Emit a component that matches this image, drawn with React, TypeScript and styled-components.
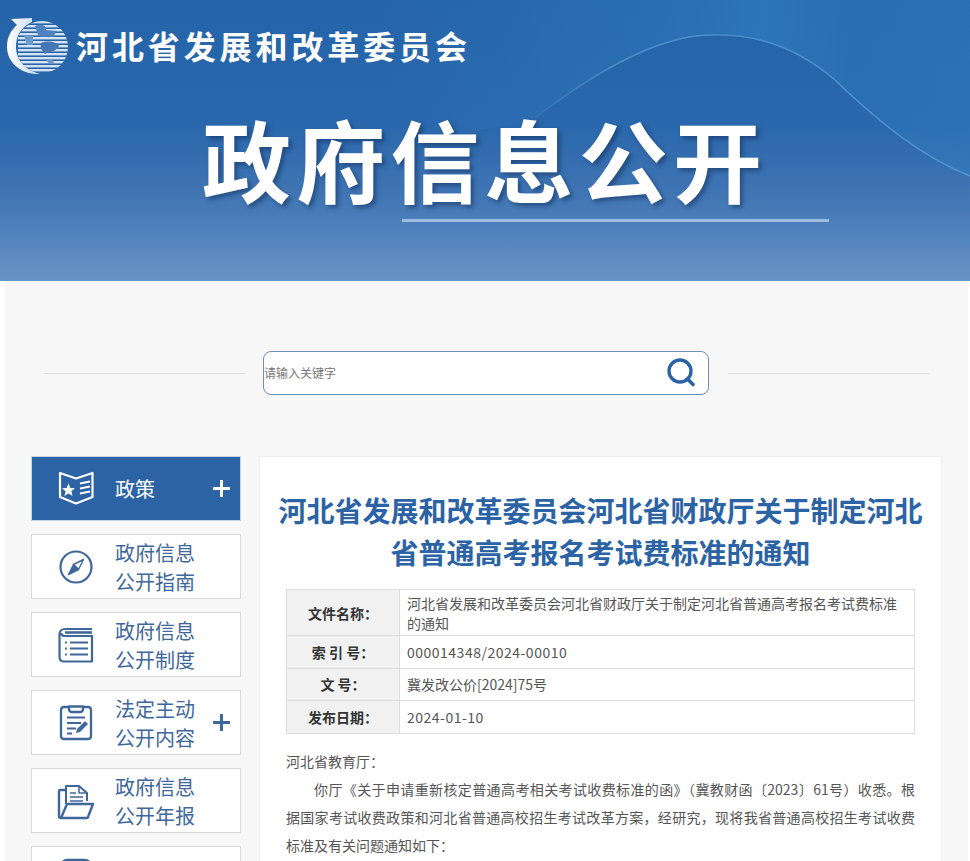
import { createGlobalStyle, styled } from 'styled-components';
import type { ReactNode } from 'react';

const FONT = '"Noto Sans CJK SC", "Liberation Sans", sans-serif';
const BLUE = '#2b63a5';
const NAV_TEXT = '#3f679b';

const GlobalStyle = createGlobalStyle`
  html, body {
    margin: 0;
    height: 861px;
    overflow: hidden;
    background: #fff;
    font-family: ${FONT};
  }
  * { box-sizing: border-box; }
`;

const Banner = styled.header`
  position: relative;
  height: 281px;
  overflow: hidden;
  background: linear-gradient(180deg, #2564a9 0%, #2a67ac 45%, #4377b5 72%, #6893c6 100%);
`;

const WaveArt = styled.svg`
  position: absolute;
  inset: 0;
`;

const BrandRow = styled.div`
  position: relative;
  display: flex;
  align-items: center;
  height: 58px;
  margin-top: 18px;
  padding-left: 7px;
`;

const BrandName = styled.div`
  margin: -4px 0 0 7px;
  color: #fff;
  font-size: 32px;
  font-weight: 700;
  line-height: 40px;
  letter-spacing: 3.9px;
  white-space: nowrap;
`;

const HeroTitle = styled.h1`
  position: relative;
  margin: 32px 0 0 202px;
  color: #fff;
  font-size: 89px;
  font-weight: 700;
  line-height: 100px;
  letter-spacing: 5.2px;
  white-space: nowrap;
  text-shadow: 3px 3px 4px rgba(20, 50, 95, 0.55);
`;

const HeroRule = styled.div`
  position: relative;
  width: 427px;
  height: 3px;
  margin: 11px 0 0 402px;
  background: #9dbbe0;
`;

const Main = styled.main`
  margin: 0 2px 0 5px;
  padding-bottom: 40px;
  background: #f7f7f7;
`;

const SearchRow = styled.div`
  display: flex;
  align-items: center;
  gap: 18px;
  padding: 70px 39px 0;
`;

const SearchLine = styled.div`
  flex: 1;
  height: 1px;
  background: #dedede;
`;

const SearchBox = styled.div`
  display: flex;
  align-items: center;
  justify-content: space-between;
  width: 446px;
  height: 44px;
  margin-right: 1px;
  padding-right: 11px;
  padding-bottom: 2px;
  border: 1px solid #6f8db5;
  border-radius: 8px;
  background: #fff;
  color: #777;
  font-size: 12px;
`;

const SearchIcon = styled.svg`
  width: 32px;
  height: 32px;
  color: ${BLUE};
`;

const Columns = styled.div`
  display: flex;
  align-items: flex-start;
  gap: 18px;
  padding: 61px 0 0 26px;
`;

const Sidebar = styled.nav`
  display: flex;
  flex-direction: column;
  gap: 13px;
  width: 210px;
`;

const NavItem = styled.a<{ $active?: boolean }>`
  display: flex;
  align-items: center;
  height: 65px;
  border: 1px solid ${({ $active }) => ($active ? '#c4d2e4' : '#d8d8d8')};
  background: ${({ $active }) => ($active ? BLUE : '#fff')};
  color: ${({ $active }) => ($active ? '#fff' : NAV_TEXT)};
`;

const NavIcon = styled.span`
  display: flex;
  justify-content: center;
  flex: none;
  width: 83px;
  padding-left: 5px;
  svg { display: block; width: 36px; height: 36px; overflow: visible; }
`;

const NavLabel = styled.span`
  flex: 1;
  font-size: 20px;
  line-height: 29px;
`;

const NavPlus = styled.svg`
  flex: none;
  width: 17px;
  height: 17px;
  margin-right: 10px;
`;

const Panel = styled.article`
  width: 683px;
  padding: 32px 26px 40px;
  border: 1px solid #eeeeee;
  background: #fff;
`;

const ArticleTitle = styled.h2`
  margin: 0 -10px 16px;
  color: ${BLUE};
  font-size: 28px;
  font-weight: 700;
  line-height: 42px;
  text-align: center;
`;

const InfoTable = styled.table`
  width: 629px;
  margin: 0;
  border-collapse: collapse;
  table-layout: fixed;
  font-size: 14px;
`;

const InfoLabel = styled.th`
  width: 113px;
  padding: 0;
  border: 1px solid #dddddd;
  background: #f1f1f1;
  color: #333;
  font-size: 14px;
  font-weight: 700;
  text-align: center;
`;

const InfoValue = styled.td<{ $tall?: boolean; $numeric?: boolean }>`
  height: ${({ $tall }) => ($tall ? '46px' : '32.5px')};
  padding: 0 16px 0 7px;
  border: 1px solid #dddddd;
  color: #555;
  line-height: 20px;
  letter-spacing: ${({ $numeric }) => ($numeric ? '0.5px' : '0')};
`;

const Body = styled.div`
  margin-top: 13px;
  color: #555;
  font-size: 14px;
  line-height: 28px;
`;

const Line = styled.p<{ $indent?: boolean; $fill?: boolean }>`
  margin: 0;
  text-indent: ${({ $indent }) => ($indent ? '2em' : '0')};
  text-align: justify;
  text-align-last: ${({ $fill }) => ($fill ? 'justify' : 'auto')};
`;

function Logo() {
  const stripes = [];
  for (let y = 3; y < 56; y += 4) stripes.push(y);
  return (
    <svg width="62" height="58" viewBox="0 0 62 58" aria-hidden="true">
      <defs>
        <clipPath id="globe">
          <circle cx="35" cy="29" r="26" />
        </clipPath>
        <linearGradient id="shell" x1="0" x2="1">
          <stop offset="0" stopColor="#ffffff" />
          <stop offset="1" stopColor="#c3d5ea" />
        </linearGradient>
      </defs>
      <path
        d="M4 1 L25 0 L25 4 C14 9 9 18 9 29 C9 42 18 52 33 56 C15 57 0 45 0 29 C0 19 4 12 10 7 Z"
        fill="url(#shell)"
      />
      <g clipPath="url(#globe)">
        {stripes.map((y) => (
          <rect key={y} x="11" y={y} width="52" height="2.4" fill="#d5e2f2" />
        ))}
        <path d="M28 8 C35 5 40 8 39 12 L50 13 L46 19 C40 17 35 21 31 17 Z" fill="#4f83be" />
        <path d="M34 25 C41 22 50 24 52 28 C49 34 43 33 38 36 C35 33 33 30 34 25Z" fill="#4579b6" />
        <path d="M17 18 H26 V27 H20 Z" fill="#6c9ac9" />
        <path d="M40 42 C44 41 47 42 47 45 C44 47 41 46 40 42Z" fill="#6c9ac9" />
      </g>
    </svg>
  );
}

function BookIcon() {
  return (
    <svg viewBox="0 0 36 36" fill="none" stroke="currentColor" strokeWidth="2.2" strokeLinejoin="round" aria-hidden="true">
      <path d="M2 2 L18 7.5 L34.5 2 V26 L18 32.5 L2 26 Z" />
      <path d="M10.5 12.5 L12.4 17 L17 17.3 L13.4 20.3 L14.6 25 L10.5 22.4 L6.4 25 L7.6 20.3 L4 17.3 L8.6 17 Z" fill="currentColor" stroke="none" />
      <path d="M22 12.5 L32 10.5 M22 17.5 L32 15.5 M22 22.5 L32 20.5" strokeWidth="2" />
    </svg>
  );
}

function CompassIcon() {
  return (
    <svg viewBox="0 0 36 36" fill="none" stroke="currentColor" strokeWidth="2.2" aria-hidden="true">
      <circle cx="18" cy="18" r="15.5" />
      <path d="M25.5 10.5 L20.5 20.5 L15.5 15.5 Z" strokeWidth="1.4" strokeLinejoin="round" />
      <path d="M10.5 25.5 L15.5 15.5 L20.5 20.5 Z" fill="currentColor" strokeWidth="1.4" strokeLinejoin="round" />
    </svg>
  );
}

function ListBookIcon() {
  return (
    <svg viewBox="0 0 36 36" fill="none" stroke="currentColor" strokeWidth="2.2" strokeLinejoin="round" aria-hidden="true">
      <path d="M34 2 H7 C3.5 2 1.5 4.5 1.5 7 V30 C1.5 33 3.5 34.5 6 34.5 H34 V9 H7 C4.5 9 3 7.5 3.5 6 " />
      <path d="M7 5.5 H34" strokeWidth="2.6" />
      <path d="M12 15.5 H30 M12 21.5 H30 M12 27.5 H30" strokeWidth="2" />
      <path d="M7 15.5 H8.8 M7 21.5 H8.8 M7 27.5 H8.8" strokeWidth="2.2" />
    </svg>
  );
}

function ClipboardIcon() {
  return (
    <svg viewBox="0 0 36 36" fill="none" stroke="currentColor" strokeWidth="2.3" strokeLinejoin="round" aria-hidden="true">
      <path d="M11 2 H6 C4 2 3 3 3 5 V31 C3 33 4 34 6 34 H30 C32 34 33 33 33 31 V5 C33 3 32 2 30 2 H25" />
      <path d="M11 1.5 H25 V4 C25 6 24 7 22 7 H14 C12 7 11 6 11 4 Z" />
      <path d="M9 12.5 H27 M9 18 H23 M9 23.5 H18 M9 28.5 H14" strokeWidth="2" />
      <path d="M18 28 L19 24 L27 16 L30 19 L22 27 Z" fill="currentColor" stroke="none" />
    </svg>
  );
}

function FolderIcon() {
  return (
    <svg viewBox="0 0 36 36" fill="none" stroke="currentColor" strokeWidth="2" strokeLinejoin="round" aria-hidden="true">
      <path d="M8 21 V3 H21 L29 10 V18" />
      <path d="M21 3 V10 H29" strokeWidth="1.5" />
      <path d="M12 10 H18 M12 14 H25 M12 18 H25" strokeWidth="1.6" />
      <path d="M8 7 H2 C1 7 1 8 1 9 V33 C1 34 2 35 3 35" strokeWidth="2.4" />
      <path d="M9 21 H35 L30 34 C30 35 29 35 28 35 H3 Z" strokeWidth="2.4" />
    </svg>
  );
}

function FrameIcon() {
  return (
    <svg viewBox="0 0 36 36" fill="none" stroke="currentColor" strokeWidth="2.4" aria-hidden="true">
      <rect x="2.5" y="-1" width="31" height="36" rx="7" />
      <path d="M9 12 H27 M9 20 H27" strokeWidth="2" />
    </svg>
  );
}

function Plus() {
  return (
    <NavPlus viewBox="0 0 17 17" aria-hidden="true">
      <path d="M8.5 0 V17 M0 8.5 H17" stroke="currentColor" strokeWidth="3" />
    </NavPlus>
  );
}

type NavEntry = { icon: ReactNode; label: ReactNode; plus?: boolean; active?: boolean };

const navEntries: NavEntry[] = [
  { icon: <BookIcon />, label: '政策', plus: true, active: true },
  { icon: <CompassIcon />, label: <>政府信息<br />公开指南</> },
  { icon: <ListBookIcon />, label: <>政府信息<br />公开制度</> },
  { icon: <ClipboardIcon />, label: <>法定主动<br />公开内容</>, plus: true },
  { icon: <FolderIcon />, label: <>政府信息<br />公开年报</> },
  { icon: <FrameIcon />, label: null },
];

export default function App() {
  return (
    <>
      <GlobalStyle />
      <Banner>
        <WaveArt width="970" height="281" viewBox="0 0 970 281" aria-hidden="true">
          <defs>
            <linearGradient id="wavefade" x1="380" y1="0" x2="970" y2="0" gradientUnits="userSpaceOnUse">
              <stop offset="0" stopColor="#2f7fc0" stopOpacity="0" />
              <stop offset="0.5" stopColor="#2f7fc0" stopOpacity="0.4" />
              <stop offset="0.65" stopColor="#2f7fc0" stopOpacity="0.65" />
              <stop offset="0.8" stopColor="#2f7fc0" stopOpacity="0.35" />
              <stop offset="1" stopColor="#2f7fc0" stopOpacity="0.45" />
            </linearGradient>
            <linearGradient id="edgefade" x1="500" y1="0" x2="970" y2="0" gradientUnits="userSpaceOnUse">
              <stop offset="0" stopColor="#62a6dc" stopOpacity="0" />
              <stop offset="0.25" stopColor="#62a6dc" stopOpacity="0.6" />
              <stop offset="1" stopColor="#62a6dc" stopOpacity="0.7" />
            </linearGradient>
          </defs>
          <path
            d="M380 0 H970 V176 C925 158 885 128 835 80 C800 50 760 33 710 35 C660 36 600 68 535 118 C490 135 430 130 380 140 Z"
            fill="url(#wavefade)"
          />
          <path
            d="M535 118 C600 68 660 36 710 35 C760 33 800 50 835 80 C885 128 925 158 970 176"
            fill="none"
            stroke="url(#edgefade)"
            strokeWidth="1.4"
          />
        </WaveArt>
        <BrandRow>
          <Logo />
          <BrandName>河北省发展和改革委员会</BrandName>
        </BrandRow>
        <HeroTitle>政府信息公开</HeroTitle>
        <HeroRule />
      </Banner>
      <Main>
        <SearchRow>
          <SearchLine />
          <SearchBox>
            请输入关键字
            <SearchIcon viewBox="0 0 32 32" aria-hidden="true">
              <circle cx="15" cy="15" r="11" fill="none" stroke="currentColor" strokeWidth="3.4" />
              <path d="M22.5 23 L28 28.5" stroke="currentColor" strokeWidth="3.6" strokeLinecap="round" />
            </SearchIcon>
          </SearchBox>
          <SearchLine />
        </SearchRow>
        <Columns>
          <Sidebar>
            {navEntries.map((entry, i) => (
              <NavItem key={i} $active={entry.active}>
                <NavIcon>{entry.icon}</NavIcon>
                <NavLabel>{entry.label}</NavLabel>
                {entry.plus && <Plus />}
              </NavItem>
            ))}
          </Sidebar>
          <Panel>
            <ArticleTitle>河北省发展和改革委员会河北省财政厅关于制定河北省普通高考报名考试费标准的通知</ArticleTitle>
            <InfoTable>
              <tbody>
                <tr>
                  <InfoLabel>文件名称：</InfoLabel>
                  <InfoValue $tall>河北省发展和改革委员会河北省财政厅关于制定河北省普通高考报名考试费标准的通知</InfoValue>
                </tr>
                <tr>
                  <InfoLabel>索 引 号：</InfoLabel>
                  <InfoValue $numeric>000014348/2024-00010</InfoValue>
                </tr>
                <tr>
                  <InfoLabel>文 号：</InfoLabel>
                  <InfoValue>冀发改公价[2024]75号</InfoValue>
                </tr>
                <tr>
                  <InfoLabel>发布日期：</InfoLabel>
                  <InfoValue $numeric>2024-01-10</InfoValue>
                </tr>
              </tbody>
            </InfoTable>
            <Body>
              <Line>河北省教育厅：</Line>
              <Line $indent $fill>你厅《关于申请重新核定普通高考相关考试收费标准的函》（冀教财函〔2023〕61号）收悉。根</Line>
              <Line $fill>据国家考试收费政策和河北省普通高校招生考试改革方案，经研究，现将我省普通高校招生考试收费</Line>
              <Line>标准及有关问题通知如下：</Line>
            </Body>
          </Panel>
        </Columns>
      </Main>
    </>
  );
}
